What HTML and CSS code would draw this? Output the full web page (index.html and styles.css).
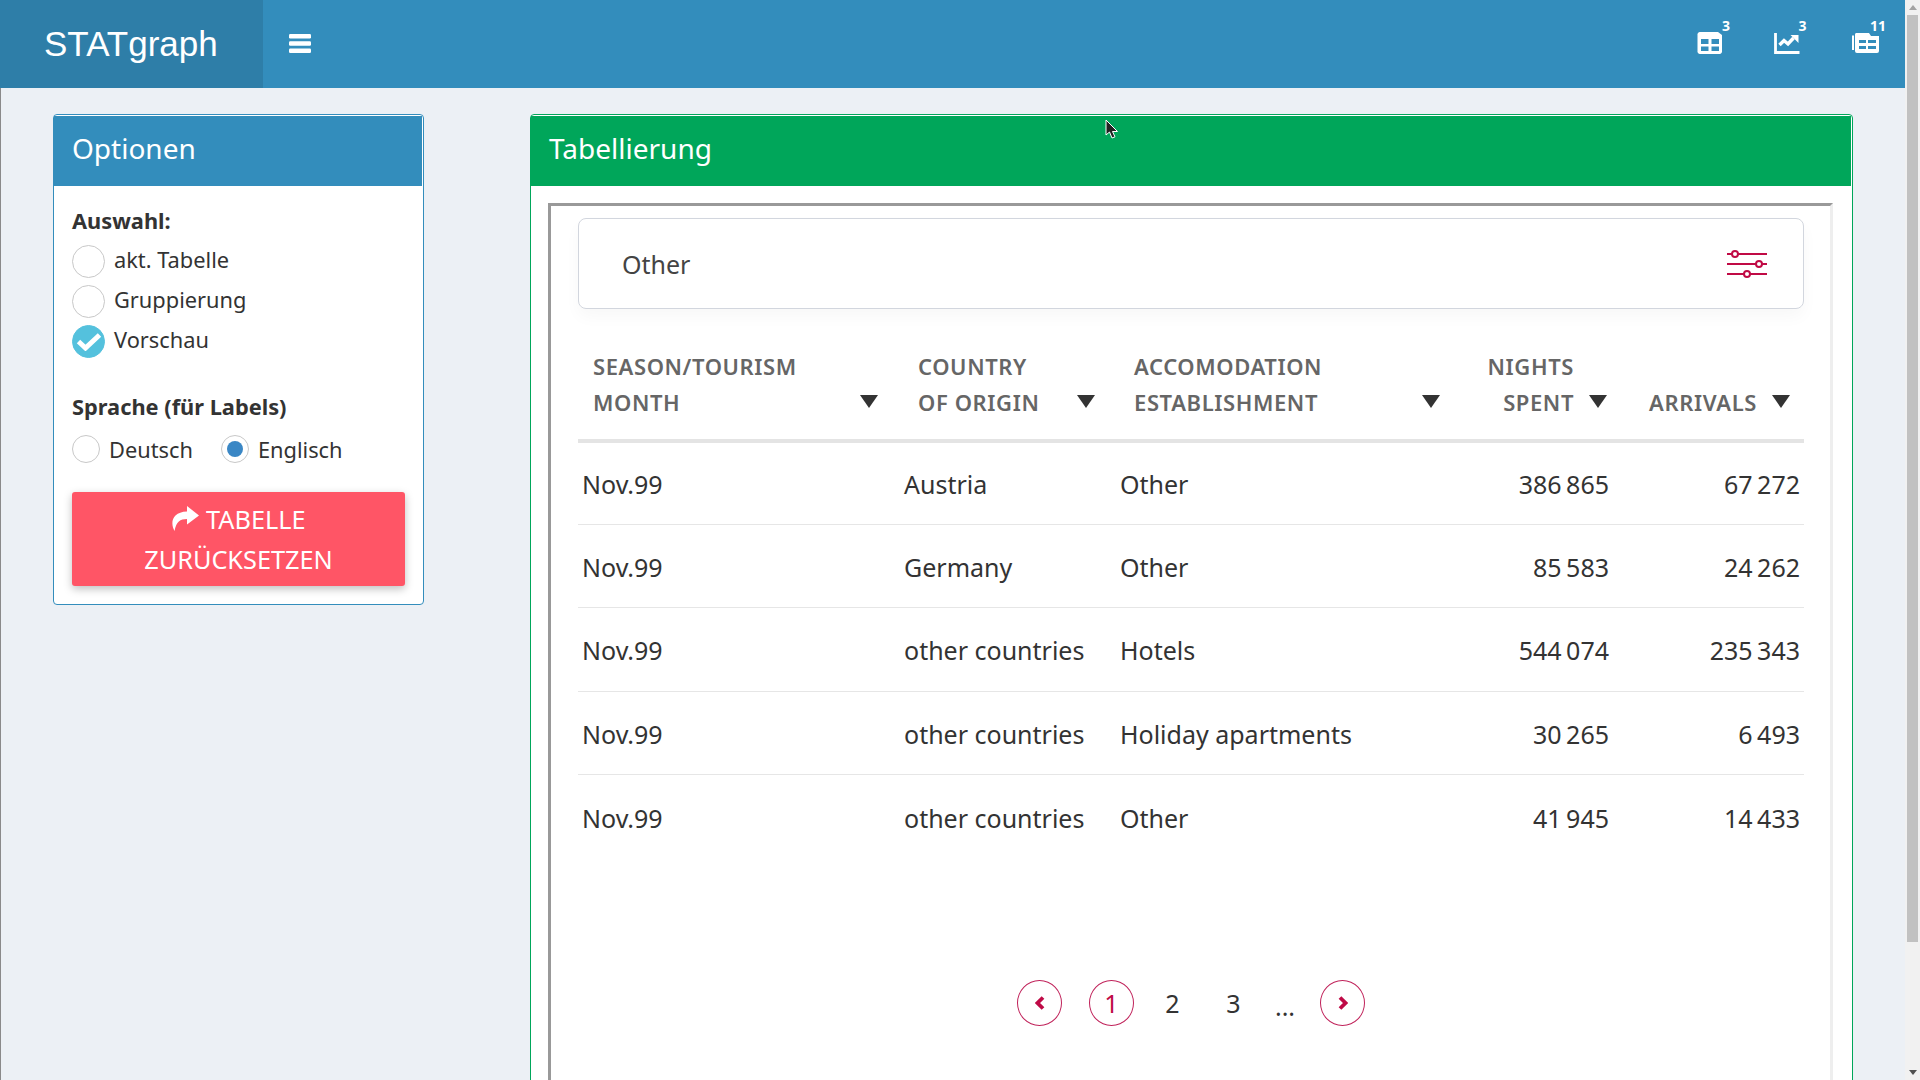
FILE: index.html
```html
<!DOCTYPE html>
<html lang="en">
<head>
    <meta charset="UTF-8">
    <title>STATgraph</title>
    <link rel="stylesheet" href="styles.css">
</head>
<body>
    <div class="page">
        <header class="topbar">
            <div class="logo">STATgraph</div>
            <svg class="burger" width="22" height="19" viewBox="0 0 22 19"><rect y="0" width="22" height="4.4" rx="1.2"/><rect y="7.3" width="22" height="4.4" rx="1.2"/><rect y="14.6" width="22" height="4.4" rx="1.2"/></svg>
            <div class="top-icons">
                <div class="top-icon">
                    <svg width="26" height="22" viewBox="0 0 26 22"><path fill-rule="evenodd" d="M3 0H21L25 3V19A2.500 2.500 0 0 1 22.500 22H3A2.500 2.500 0 0 1 .5 19V3A2.500 2.500 0 0 1 3 0ZM4 7V12H11.500V7ZM14.500 7V12H22V7ZM4 14.500V19H11.500V14.500ZM14.500 14.500V19H22V14.500Z"/></svg>
                    <span class="count">3</span>
                </div>
                <div class="top-icon">
                    <svg width="26" height="22" viewBox="0 0 26 22"><path d="M1.500 1V20.500H25.500" fill="none" stroke="#fff" stroke-width="2.800"/><path d="M5.500 13L10 8.500L14 12L19.500 6" fill="none" stroke="#fff" stroke-width="3.400"/><path d="M16.500 3H24.500V11Z"/></svg>
                    <span class="count">3</span>
                </div>
                <div class="top-icon wide">
                    <svg width="29" height="20" viewBox="0 0 29 20"><path d="M3 2.500V17" fill="none" stroke="#fff" stroke-width="2"/><path fill-rule="evenodd" d="M8 0H19L21 3H29V18A2 2 0 0 1 27 20H7A2 2 0 0 1 5 18V2A2 2 0 0 1 8 0ZM9 7V10H16V7ZM18 7V10H26V7ZM9 13V16H16V13ZM18 13V16H26V13Z"/></svg>
                    <span class="count">11</span>
                </div>
            </div>
        </header>

        <div class="content">
            <section class="panel panel-blue">
                <h3 class="panel-title">Optionen</h3>
                <div class="options">
                    <div class="field-label">Auswahl:</div>
                    <div class="check-row"><span class="check"></span><span class="check-text">akt. Tabelle</span></div>
                    <div class="check-row"><span class="check"></span><span class="check-text">Gruppierung</span></div>
                    <div class="check-row">
                        <span class="check checked">
                            <svg width="26" height="19" viewBox="0 0 26 19"><path d="M2.500 9.500L9.500 16L23.500 3" fill="none" stroke="#fff" stroke-width="5"/></svg>
                        </span>
                        <span class="check-text">Vorschau</span>
                    </div>
                    <div class="field-label lang-label">Sprache (für Labels)</div>
                    <div class="radio-row">
                        <div class="radio-item"><span class="radio"></span>Deutsch</div>
                        <div class="radio-item"><span class="radio selected"></span>Englisch</div>
                    </div>
                    <button class="reset-btn">
                        <svg width="28" height="25" viewBox="0 0 28 25"><path d="M16 0L28 9.500L16 18.500V13C9 13 5.500 15.500 3.500 25C-1 17 1 6 16 5.500Z"/></svg>
                        TABELLE ZURÜCKSETZEN
                    </button>
                </div>
            </section>

            <section class="panel panel-green">
                <h3 class="panel-title">Tabellierung</h3>
                <div class="inner-box">
                    <div class="filter-card">
                        <span>Other</span>
                        <svg width="40" height="28" viewBox="0 0 40 28" fill="none" stroke="#c00a45" stroke-width="2"><path d="M0 4H40M0 14H40M0 24H40"/><circle cx="8" cy="4" r="3" fill="#fff"/><circle cx="32" cy="14" r="3" fill="#fff"/><circle cx="20" cy="24" r="3" fill="#fff"/></svg>
                    </div>

                    <table class="data-table">
                        <colgroup>
                            <col class="col-season"><col class="col-country"><col class="col-accom"><col class="col-nights"><col class="col-arrivals">
                        </colgroup>
                        <thead>
                            <tr>
                                <th class="th-season"><div class="th-inner"><span>SEASON/TOURISM<br>MONTH</span><i class="sort"></i></div></th>
                                <th class="th-country"><div class="th-inner"><span>COUNTRY<br>OF ORIGIN</span><i class="sort"></i></div></th>
                                <th class="th-accom"><div class="th-inner"><span>ACCOMODATION<br>ESTABLISHMENT</span><i class="sort"></i></div></th>
                                <th class="th-nights"><div class="th-inner num"><span>NIGHTS<br>SPENT</span><i class="sort"></i></div></th>
                                <th class="th-arrivals"><div class="th-inner num"><span>ARRIVALS</span><i class="sort"></i></div></th>
                            </tr>
                        </thead>
                        <tbody>
                            <tr><td>Nov.99</td><td>Austria</td><td>Other</td><td class="num">386 865</td><td class="num">67 272</td></tr>
                            <tr><td>Nov.99</td><td>Germany</td><td>Other</td><td class="num">85 583</td><td class="num">24 262</td></tr>
                            <tr><td>Nov.99</td><td>other countries</td><td>Hotels</td><td class="num">544 074</td><td class="num">235 343</td></tr>
                            <tr><td>Nov.99</td><td>other countries</td><td>Holiday apartments</td><td class="num">30 265</td><td class="num">6 493</td></tr>
                            <tr><td>Nov.99</td><td>other countries</td><td>Other</td><td class="num">41 945</td><td class="num">14 433</td></tr>
                        </tbody>
                    </table>

                    <div class="pager">
                        <span class="page-btn ring prev"><svg width="10" height="14" viewBox="0 0 10 14"><path d="M8 1.500L2.500 7L8 12.500" fill="none" stroke="#bf0a46" stroke-width="3.800"/></svg></span>
                        <span class="page-btn ring">1</span>
                        <span class="page-btn">2</span>
                        <span class="page-btn">3</span>
                        <span class="dots">...</span>
                        <span class="page-btn ring"><svg width="10" height="14" viewBox="0 0 10 14"><path d="M2 1.500L7.500 7L2 12.500" fill="none" stroke="#bf0a46" stroke-width="3.800"/></svg></span>
                    </div>
                </div>
            </section>
        </div>
    </div>

    <div class="scrollbar">
        <i class="arrow-up"></i>
        <div class="thumb"></div>
        <i class="arrow-down"></i>
    </div>

    <svg class="cursor" width="14" height="21" viewBox="0 0 14 21"><path d="M1 1V16L4.500 13L7 19L10 17.800L7.500 12.500H12.500Z" fill="#222" stroke="#fff" stroke-width="1"/></svg>
</body>
</html>
```

FILE: styles.css
```css
html, body {
    height: 100%;
    margin: 0;
    overflow: hidden;
}
body {
    display: flex;
    font-family: "Noto Sans", sans-serif;
    color: #333;
    background: #ecf0f5;
}
.page {
    flex: 1;
    min-width: 0;
    display: flex;
    flex-direction: column;
    overflow: hidden;
}

/* top bar */
.topbar {
    height: 88px;
    flex: none;
    display: flex;
    align-items: center;
    background: #338dbc;
}
.logo {
    width: 263px;
    height: 88px;
    box-sizing: border-box;
    padding-left: 44px;
    line-height: 87px;
    font-family: "Liberation Sans", sans-serif;
    font-size: 35px;
    color: #fff;
    background: #2e7ea8;
}
.burger {
    margin-left: 26px;
    margin-top: -2px;
    fill: #fff;
}
.top-icons {
    margin-left: auto;
    display: flex;
    gap: 50.5px;
    margin-right: 26px;
}
.top-icon {
    position: relative;
    display: flex;
    width: 26px;
    height: 22px;
    margin-top: -2px;
    fill: #fff;
}
.top-icon svg {
    flex: none;
}
.wide {
    width: 29px;
}
.wide svg {
    margin-top: 1px;
}
.count {
    position: absolute;
    left: 25px;
    top: -14px;
    font-size: 14px;
    font-weight: 700;
    line-height: 16px;
    color: #fff;
}
.wide .count {
    left: 20px;
}

/* content */
.content {
    flex: 1;
    min-height: 0;
    display: flex;
    align-items: flex-start;
    gap: 106px;
    padding: 26px 52px 0;
    border-left: 1px solid #8a8a8a;
}
.panel {
    box-sizing: border-box;
    padding-top: 1px;
    background: #fff;
    border: 1px solid;
    border-radius: 4px;
}
.panel-blue {
    width: 371px;
    flex: none;
    border-color: #338dbc;
}
.panel-green {
    flex: 1;
    min-width: 0;
    border-color: #00a65a;
}
.panel-title {
    height: 70px;
    margin: 0 1px 0 0;
    padding-left: 18px;
    line-height: 64px;
    font-size: 28px;
    font-weight: 400;
    color: #fff;
}
.panel-blue .panel-title {
    background: #338dbc;
}
.panel-green .panel-title {
    background: #00a65a;
}

/* options form */
.options {
    padding: 16.5px 18px 18px;
}
.field-label {
    font-size: 21.8px;
    font-weight: 700;
    line-height: 36px;
    margin-bottom: 2.5px;
}
.lang-label {
    margin-top: 28px;
    margin-bottom: 10px;
}
.check-row {
    display: flex;
    align-items: center;
    gap: 9px;
    height: 40px;
    font-size: 21.8px;
}
.check-text {
    margin-top: -3px;
}
.check {
    box-sizing: border-box;
    width: 33px;
    height: 33px;
    border: 1px solid #c8c8c8;
    border-radius: 50%;
    display: flex;
    align-items: center;
    justify-content: center;
}
.checked {
    background: #54c1dd;
    border-color: #54c1dd;
}
.radio-row {
    display: flex;
    gap: 28px;
    height: 28px;
    font-size: 21.8px;
}
.radio-item {
    display: flex;
    align-items: center;
    gap: 9px;
}
.radio {
    box-sizing: border-box;
    width: 28px;
    height: 28px;
    border: 1px solid #c8c8c8;
    border-radius: 50%;
    padding: 5px;
}
.selected::before {
    content: "";
    display: block;
    width: 16px;
    height: 16px;
    border-radius: 50%;
    background: #3a87c5;
}
.reset-btn {
    display: block;
    box-sizing: border-box;
    width: 333px;
    height: 94px;
    margin-top: 29px;
    padding: 6px 40px;
    border: none;
    border-radius: 3px;
    background: #ff5566;
    box-shadow: 0 3px 8px rgba(0, 0, 0, 0.25);
    font-family: inherit;
    font-size: 25.3px;
    line-height: 40px;
    color: #fff;
    fill: #fff;
}
.reset-btn svg {
    vertical-align: -2px;
}

/* table box */
.inner-box {
    margin: 17px 19px 0 17px;
    padding: 12px 26px 200px 27px;
    border-top: 3px solid #999;
    border-left: 3px solid #999;
    border-right: 3px solid #eee;
}
.filter-card {
    box-sizing: border-box;
    height: 91px;
    display: flex;
    align-items: center;
    justify-content: space-between;
    padding: 0 36px 0 43px;
    border: 1px solid #d2d6de;
    border-radius: 8px;
    box-shadow: 0 8px 16px rgba(0, 0, 0, 0.03);
    font-size: 25px;
    color: #444;
}
.data-table {
    width: 100%;
    table-layout: fixed;
    border-collapse: collapse;
    margin-top: 39px;
}
.col-season { width: 322px; }
.col-country { width: 216px; }
.col-accom { width: 324px; }
.col-nights { width: 173px; }
th {
    padding: 0 0 19px 15px;
    border-bottom: 4px solid #e4e4e4;
    font-size: 22px;
    font-weight: 600;
    line-height: 36px;
    letter-spacing: 0.6px;
    text-align: left;
    vertical-align: bottom;
    color: #666;
}
.th-inner {
    display: flex;
    align-items: flex-end;
    justify-content: space-between;
}
.th-inner.num {
    justify-content: flex-end;
    text-align: right;
}
.sort {
    width: 0;
    height: 0;
    margin-bottom: 12px;
    border-left: 9px solid transparent;
    border-right: 9px solid transparent;
    border-top: 13px solid #333;
}
.th-season { padding-right: 22px; }
.th-country { padding-left: 18px; padding-right: 21px; }
.th-accom { padding-left: 18px; }
.th-nights { padding-right: 6px; }
.th-arrivals { padding-right: 14px; }
.th-inner.num .sort {
    margin-left: 15px;
}
td {
    height: 83.4px;
    box-sizing: border-box;
    padding: 2px 4px 0;
    border-bottom: 1px solid #e6e6e6;
    font-size: 25px;
}
tbody tr:last-child td {
    border-bottom: none;
}
td.num {
    text-align: right;
    word-spacing: -2px;
}

/* pagination */
.pager {
    display: flex;
    justify-content: center;
    align-items: center;
    gap: 16px;
    margin-top: 122.5px;
    font-size: 25px;
}
.page-btn {
    box-sizing: border-box;
    width: 45px;
    height: 46px;
    display: flex;
    align-items: center;
    justify-content: center;
}
.ring {
    border: 1px solid #c0225a;
    border-radius: 50%;
    color: #bf0a46;
}
.prev {
    margin-right: 11px;
}
.dots {
    width: 26px;
    margin-top: 6px;
    text-align: center;
    margin-right: 6px;
}

/* scrollbar and pointer */
.scrollbar {
    position: relative;
    flex: none;
    width: 15px;
    background: #f1f1f1;
}
.thumb {
    margin: 15px 2px 0;
    height: 927px;
    background: #c1c1c1;
}
.arrow-up, .arrow-down {
    position: absolute;
    left: 4px;
    width: 0;
    height: 0;
    border-left: 4px solid transparent;
    border-right: 4px solid transparent;
}
.arrow-up {
    top: 5px;
    border-bottom: 5px solid #a3a3a3;
}
.arrow-down {
    bottom: 5px;
    border-top: 5px solid #505050;
}
.cursor {
    position: fixed;
    left: 1105px;
    top: 119px;
}
```
